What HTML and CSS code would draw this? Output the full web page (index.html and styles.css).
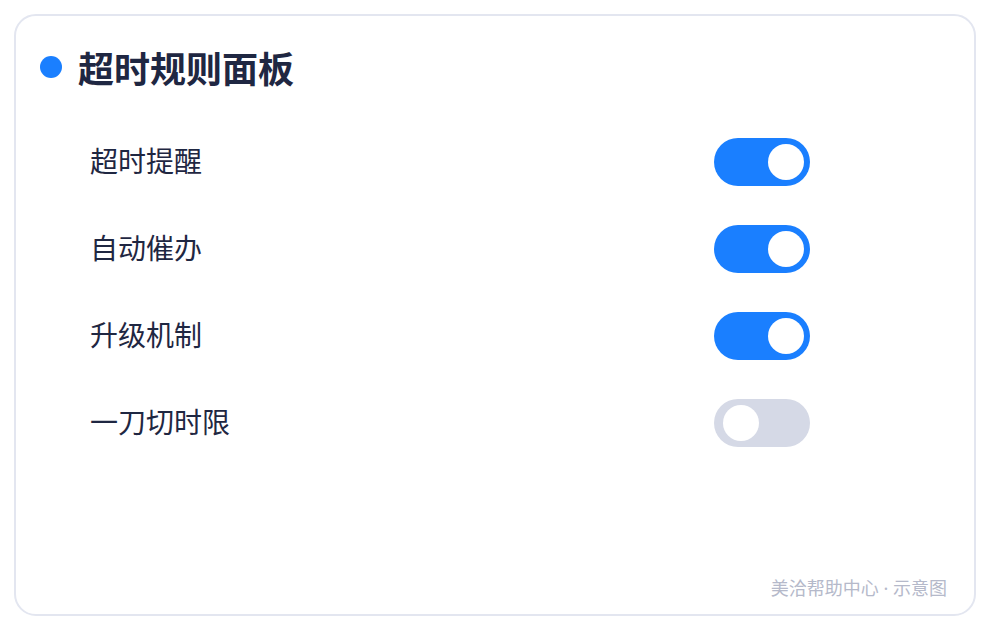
FILE: index.html
```html
<!DOCTYPE html>
<html lang="zh-CN">
<head>
  <meta charset="UTF-8" />
  <meta name="viewport" content="width=device-width, initial-scale=1" />
  <title>超时规则面板</title>
  <link rel="stylesheet" href="styles.css">
</head>
<body>

  <div class="panneau">
    <h1 class="titre"><span class="point"></span>超时规则面板</h1>

    <ul class="liste-regles">
      <li class="regle">
        <span class="nom-regle">超时提醒</span>
        <span class="interrupteur actif"><span class="bouton"></span></span>
      </li>
      <li class="regle">
        <span class="nom-regle">自动催办</span>
        <span class="interrupteur actif"><span class="bouton"></span></span>
      </li>
      <li class="regle">
        <span class="nom-regle">升级机制</span>
        <span class="interrupteur actif"><span class="bouton"></span></span>
      </li>
      <li class="regle">
        <span class="nom-regle">一刀切时限</span>
        <span class="interrupteur"><span class="bouton"></span></span>
      </li>
    </ul>

    <p class="pied">美洽帮助中心 · 示意图</p>
  </div>

</body>
</html>
```

FILE: styles.css
```css
:root {
  --bleu: #1a7fff;
  --encre: #1f2742;
  --bordure: #e3e6f0;
  --gris-off: #d5d9e6;
  --gris-pied: #b5b9ca;
  --blanc: #ffffff;
}

* {
  margin: 0;
  padding: 0;
  box-sizing: border-box;
}

body {
  font-family: "Noto Sans CJK SC", "Noto Sans", sans-serif;
  background-color: var(--blanc);
  color: var(--encre);
  padding: 14px;
  -webkit-font-smoothing: antialiased;
}

.panneau {
  width: 962px;
  height: 602px;
  border: 2px solid var(--bordure);
  border-radius: 22px;
  padding: 29px 27px 14px 24px;
  display: flex;
  flex-direction: column;
}

/* Titre */
.titre {
  display: flex;
  align-items: center;
  font-size: 36px;
  font-weight: 700;
  line-height: 44px;
  letter-spacing: 0;
}

.point {
  width: 22px;
  height: 22px;
  border-radius: 50%;
  background: var(--bleu);
  margin-right: 16px;
}

/* Liste des regles */
.liste-regles {
  list-style: none;
  margin: 49px 0 0 50px;
  width: 720px;
  display: flex;
  flex-direction: column;
  gap: 39px;
}

.regle {
  display: flex;
  justify-content: space-between;
  align-items: center;
  height: 48px;
}

.nom-regle {
  font-size: 28px;
  line-height: 44px;
  padding-bottom: 4px;
}

.interrupteur {
  width: 96px;
  height: 48px;
  border-radius: 24px;
  background: var(--gris-off);
  display: flex;
  align-items: center;
  padding: 0 6px 0 9px;
}

.interrupteur.actif {
  background: var(--bleu);
  justify-content: flex-end;
}

.bouton {
  width: 36px;
  height: 36px;
  border-radius: 50%;
  background: var(--blanc);
}

/* Pied */
.pied {
  margin-top: auto;
  align-self: flex-end;
  font-family: "Noto Sans", "Noto Sans CJK SC", sans-serif;
  font-size: 18px;
  line-height: 24px;
  color: var(--gris-pied);
}
```
